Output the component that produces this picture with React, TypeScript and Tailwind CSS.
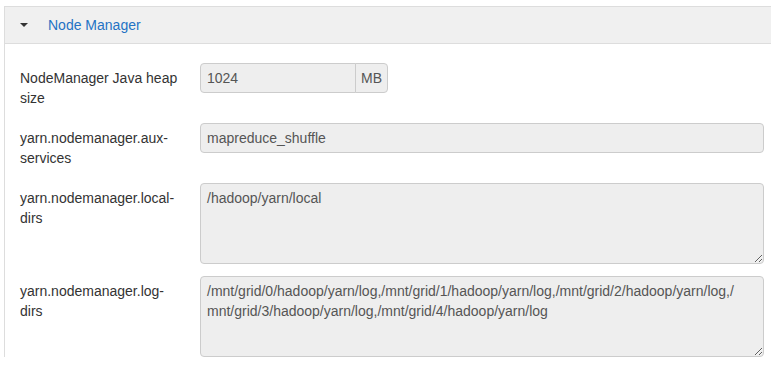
const font = { fontFamily: '"Liberation Sans", Arial, sans-serif' };

interface Field {
  label: string;
  value: string;
  kind: "unit" | "input" | "textarea";
  unit?: string;
}

// zero-width space lets the long path wrap after "log,/" like the original
const fields: Field[] = [
  { label: "NodeManager Java heap size", value: "1024", kind: "unit", unit: "MB" },
  { label: "yarn.nodemanager.aux-services", value: "mapreduce_shuffle", kind: "input" },
  { label: "yarn.nodemanager.local-dirs", value: "/hadoop/yarn/local", kind: "textarea" },
  {
    label: "yarn.nodemanager.log-dirs",
    value:
      "/mnt/grid/0/hadoop/yarn/log,/mnt/grid/1/hadoop/yarn/log,/mnt/grid/2/hadoop/yarn/log,/\u200Bmnt/grid/3/hadoop/yarn/log,/mnt/grid/4/hadoop/yarn/log",
    kind: "textarea",
  },
];

const controlBase =
  "bg-[#eeeeee] border border-[#cccccc] text-[14px] leading-5 text-[#555555] px-[6px] outline-none";

const App = () => {
  return (
    <div className="w-[771px] h-[365px] overflow-hidden bg-white pt-[6px] pl-[4px]" style={font}>
      <div className="w-[800px] border border-[#dddddd] border-b-0">
        <div className="h-[37px] bg-[#f0f0f0] border-b border-[#dddddd] flex items-center">
          <span className="ml-[15px] w-0 h-0 border-l-[4px] border-r-[4px] border-t-[4px] border-l-transparent border-r-transparent border-t-[#333333]" />
          <span className="ml-[20px] text-[14px] text-[#2473c4]">Node Manager</span>
        </div>
        <div className="pt-[19px] pl-[15px]">
          {fields.map((f) => (
            <div key={f.label} className="flex items-start mb-3">
              <label className="w-[165px] mr-[15px] pt-[5px] pb-[3px] text-[14px] leading-5 text-[#333333]">
                {f.label}
              </label>
              {f.kind === "unit" && (
                <div className="flex h-[30px]">
                  <input
                    readOnly
                    value={f.value}
                    className={`${controlBase} w-[156px] h-[30px] rounded-l-[4px]`}
                  />
                  <span className="h-[30px] w-[33px] -ml-px flex items-center justify-center bg-[#eeeeee] border border-[#cccccc] rounded-r-[4px] text-[14px] text-[#555555]">
                    {f.unit}
                  </span>
                </div>
              )}
              {f.kind === "input" && (
                <input
                  readOnly
                  value={f.value}
                  className={`${controlBase} w-[564px] h-[30px] rounded-[4px]`}
                />
              )}
              {f.kind === "textarea" && (
                <textarea
                  readOnly
                  value={f.value}
                  className={`${controlBase} w-[564px] h-[81px] rounded-[4px] pt-[4px] pb-[6px] resize-y`}
                />
              )}
            </div>
          ))}
        </div>
      </div>
    </div>
  );
};

export default App;
